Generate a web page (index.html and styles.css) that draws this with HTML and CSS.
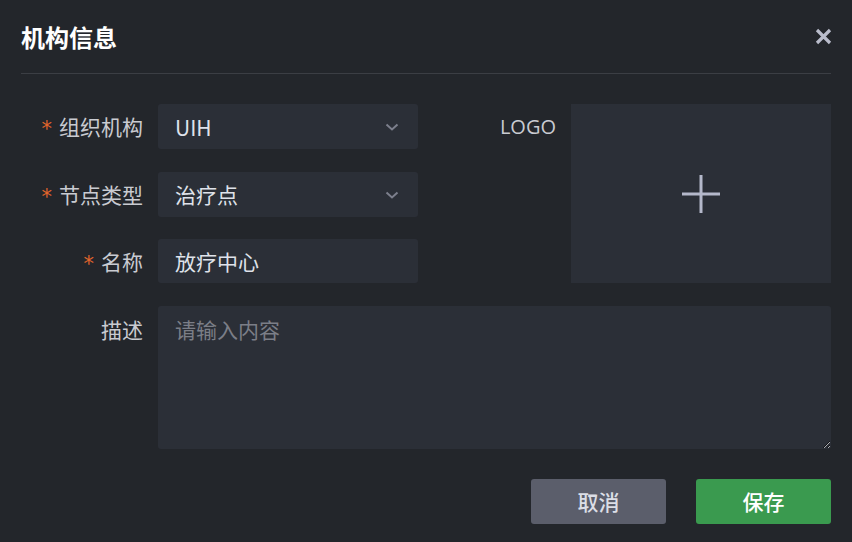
FILE: index.html
```html
<!DOCTYPE html>
<html lang="zh">
<head>
<meta charset="utf-8">
<link rel="stylesheet" href="styles.css">
</head>
<body>
<div class="dialog">
  <div class="header">
    <h1 class="title">机构信息</h1>
    <button class="close" aria-label="close">
      <svg width="17" height="17" viewBox="0 0 17 17"><path d="M2 2 L15 15 M15 2 L2 15" stroke="#b9bccb" stroke-width="3.2" stroke-linecap="butt"/></svg>
    </button>
  </div>
  <div class="form">
    <label class="label"><span class="req">*</span>组织机构</label>
    <div class="field select"><span>UIH</span><svg class="chev" width="14" height="8" viewBox="0 0 14 8"><path d="M1.5 1.5 L7 6.5 L12.5 1.5" fill="none" stroke="#7c7f8c" stroke-width="2"/></svg></div>
    <label class="label logo-label">LOGO</label>
    <div class="upload"><svg width="40" height="40" viewBox="0 0 40 40"><path d="M20 1 V39 M1 20 H39" stroke="#b4b8ca" stroke-width="3"/></svg></div>

    <label class="label"><span class="req">*</span>节点类型</label>
    <div class="field select"><span>治疗点</span><svg class="chev" width="14" height="8" viewBox="0 0 14 8"><path d="M1.5 1.5 L7 6.5 L12.5 1.5" fill="none" stroke="#7c7f8c" stroke-width="2"/></svg></div>

    <label class="label"><span class="req">*</span>名称</label>
    <div class="field"><span>放疗中心</span></div>

    <label class="label top">描述</label>
    <textarea class="textarea" placeholder="请输入内容"></textarea>
  </div>
  <div class="footer">
    <button class="btn cancel">取消</button>
    <button class="btn save">保存</button>
  </div>
</div>
</body>
</html>
```

FILE: styles.css
```css
* { box-sizing: border-box; }
html, body { margin: 0; padding: 0; background: #23262b; }
body {
  font-family: "Noto Sans CJK SC", "Noto Sans", sans-serif;
  color: #dde0e8;
  width: 852px;
  height: 542px;
  overflow: hidden;
}
.dialog { padding: 0 21px; }
.header {
  height: 74px;
  display: flex;
  align-items: center;
  justify-content: space-between;
  border-bottom: 1px solid #3b3e44;
}
.title {
  margin: 0;
  font-size: 24px;
  font-weight: 700;
  color: #ffffff;
  line-height: 1;
}
.close {
  background: none;
  border: 0;
  padding: 0;
  width: 17px;
  height: 17px;
  display: flex;
  margin-right: -1px;
}
.form {
  margin-top: 30px;
  display: grid;
  grid-template-columns: 137px 260px 153px 260px;
  grid-template-rows: 45px 45px 44px 143px;
  row-gap: 22.5px;
}
.label {
  font-size: 21px;
  color: #c9cbd1;
  display: flex;
  align-items: center;
  justify-content: flex-end;
  padding-right: 15px;
  line-height: 1;
}
.label.top, .label.logo-label { align-items: flex-start; padding-top: 13px; }
.req {
  color: #e2652c;
  margin-right: 7px;
  font-family: "DejaVu Sans", sans-serif;
  font-size: 21px;
  position: relative;
  top: 3px;
}
.logo-label { grid-row: 1 / 4; grid-column: 3; font-family: "Open Sans", "Noto Sans", sans-serif; font-size: 20px; }
.upload {
  grid-row: 1 / 4;
  grid-column: 4;
  background: #2b2f37;
  display: flex;
  align-items: center;
  justify-content: center;
}
.field {
  background: #2b2f37;
  border-radius: 3px;
  display: flex;
  align-items: center;
  justify-content: space-between;
  padding: 0 19px 0 17px;
  font-size: 21px;
  color: #dfe2ea;
}
.chev { margin-top: 1px; }
.textarea {
  grid-column: 2 / 5;
  background: #2b2f37;
  border: 0;
  border-radius: 3px;
  resize: vertical;
  padding: 8px 17px;
  font-family: "Noto Sans CJK SC", "Noto Sans", sans-serif;
  font-size: 21px;
  color: #dfe2ea;
  outline: none;
}
.textarea::placeholder { color: #7b7e87; }
.footer {
  margin-top: 30px;
  display: flex;
  justify-content: flex-end;
  gap: 30px;
}
.btn {
  width: 135px;
  height: 45px;
  border: 0;
  border-radius: 3px;
  font-family: "Noto Sans CJK SC", "Noto Sans", sans-serif;
  font-size: 21px;
  font-weight: 500;
}
.cancel { background: #5b5e6b; color: #dcdee6; }
.save { background: #3a9a4f; color: #ffffff; }
```
